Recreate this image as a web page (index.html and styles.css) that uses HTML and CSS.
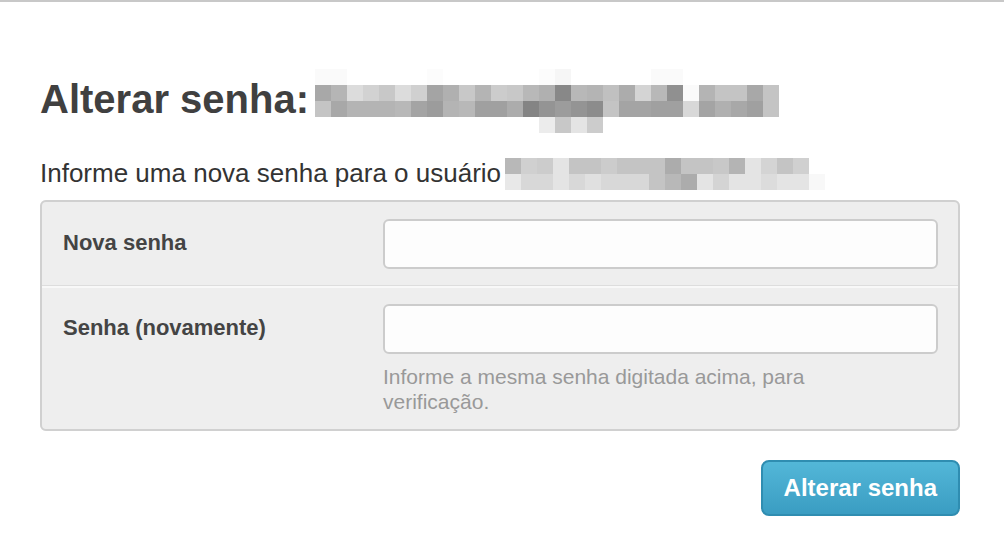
FILE: index.html
```html
<!DOCTYPE html>
<html lang="pt-BR">
<head>
<meta charset="utf-8">
<title>Alterar senha</title>
<link rel="stylesheet" href="styles.css">
</head>
<body>
<div class="topbar"></div>
<main class="page">
  <h1 class="title"><span>Alterar senha:</span>
    <svg class="blur blur-title" width="464" height="64" viewBox="0 0 464 64" shape-rendering="crispEdges" aria-hidden="true">
      <g>
        <rect x="0" y="0" width="32" height="16" fill="#fafafa"/>
        <rect x="112" y="0" width="16" height="16" fill="#fcfcfc"/>
        <rect x="224" y="0" width="16" height="16" fill="#fcfcfc"/>
        <rect x="240" y="0" width="16" height="16" fill="#f6f6f6"/>
        <rect x="336" y="0" width="32" height="16" fill="#fafafa"/>
      </g>
      <g>
        <rect x="0" y="16" width="16" height="16" fill="#a8a8a8"/>
        <rect x="16" y="16" width="16" height="16" fill="#b5b5b5"/>
        <rect x="32" y="16" width="16" height="16" fill="#dcdcdc"/>
        <rect x="48" y="16" width="16" height="16" fill="#d2d2d2"/>
        <rect x="64" y="16" width="16" height="16" fill="#c8c8c8"/>
        <rect x="80" y="16" width="16" height="16" fill="#dcdcdc"/>
        <rect x="96" y="16" width="16" height="16" fill="#d0d0d0"/>
        <rect x="112" y="16" width="16" height="16" fill="#a4a4a4"/>
        <rect x="128" y="16" width="16" height="16" fill="#b0b0b0"/>
        <rect x="144" y="16" width="16" height="16" fill="#c8c8c8"/>
        <rect x="160" y="16" width="16" height="16" fill="#b4b4b4"/>
        <rect x="176" y="16" width="16" height="16" fill="#cccccc"/>
        <rect x="192" y="16" width="16" height="16" fill="#c8c8c8"/>
        <rect x="208" y="16" width="16" height="16" fill="#b8b8b8"/>
        <rect x="224" y="16" width="16" height="16" fill="#b0b0b0"/>
        <rect x="240" y="16" width="16" height="16" fill="#888888"/>
        <rect x="256" y="16" width="16" height="16" fill="#b8b8b8"/>
        <rect x="272" y="16" width="16" height="16" fill="#b4b4b4"/>
        <rect x="288" y="16" width="16" height="16" fill="#c0c0c0"/>
        <rect x="304" y="16" width="16" height="16" fill="#acacac"/>
        <rect x="320" y="16" width="16" height="16" fill="#d4d4d4"/>
        <rect x="336" y="16" width="16" height="16" fill="#b8b8b8"/>
        <rect x="352" y="16" width="16" height="16" fill="#909090"/>
        <rect x="368" y="16" width="16" height="16" fill="#fafafa"/>
        <rect x="384" y="16" width="16" height="16" fill="#b4b4b4"/>
        <rect x="400" y="16" width="16" height="16" fill="#c4c4c4"/>
        <rect x="416" y="16" width="16" height="16" fill="#c4c4c4"/>
        <rect x="432" y="16" width="16" height="16" fill="#a8a8a8"/>
        <rect x="448" y="16" width="16" height="16" fill="#c4c4c4"/>
      </g>
      <g>
        <rect x="0" y="32" width="16" height="16" fill="#c4c4c4"/>
        <rect x="16" y="32" width="16" height="16" fill="#a8a8a8"/>
        <rect x="32" y="32" width="16" height="16" fill="#b4b4b4"/>
        <rect x="48" y="32" width="16" height="16" fill="#b4b4b4"/>
        <rect x="64" y="32" width="16" height="16" fill="#b4b4b4"/>
        <rect x="80" y="32" width="16" height="16" fill="#b8b8b8"/>
        <rect x="96" y="32" width="16" height="16" fill="#a4a4a4"/>
        <rect x="112" y="32" width="16" height="16" fill="#9c9c9c"/>
        <rect x="128" y="32" width="16" height="16" fill="#b4b4b4"/>
        <rect x="144" y="32" width="16" height="16" fill="#b8b8b8"/>
        <rect x="160" y="32" width="16" height="16" fill="#a0a0a0"/>
        <rect x="176" y="32" width="16" height="16" fill="#a0a0a0"/>
        <rect x="192" y="32" width="16" height="16" fill="#acacac"/>
        <rect x="208" y="32" width="16" height="16" fill="#848484"/>
        <rect x="224" y="32" width="16" height="16" fill="#949494"/>
        <rect x="240" y="32" width="16" height="16" fill="#9c9c9c"/>
        <rect x="256" y="32" width="16" height="16" fill="#949494"/>
        <rect x="272" y="32" width="16" height="16" fill="#8c8c8c"/>
        <rect x="288" y="32" width="16" height="16" fill="#c4c4c4"/>
        <rect x="304" y="32" width="16" height="16" fill="#a4a4a4"/>
        <rect x="320" y="32" width="16" height="16" fill="#a4a4a4"/>
        <rect x="336" y="32" width="16" height="16" fill="#a0a0a0"/>
        <rect x="352" y="32" width="16" height="16" fill="#a0a0a0"/>
        <rect x="368" y="32" width="16" height="16" fill="#d8d8d8"/>
        <rect x="384" y="32" width="16" height="16" fill="#a4a4a4"/>
        <rect x="400" y="32" width="16" height="16" fill="#b0b0b0"/>
        <rect x="416" y="32" width="16" height="16" fill="#a8a8a8"/>
        <rect x="432" y="32" width="16" height="16" fill="#a0a0a0"/>
        <rect x="448" y="32" width="16" height="16" fill="#c4c4c4"/>
      </g>
      <g>
        <rect x="224" y="48" width="16" height="16" fill="#ececec"/>
        <rect x="240" y="48" width="16" height="16" fill="#c8c8c8"/>
        <rect x="256" y="48" width="16" height="16" fill="#e4e4e4"/>
        <rect x="272" y="48" width="16" height="16" fill="#cccccc"/>
      </g>
    </svg>
  </h1>

  <p class="intro"><span>Informe uma nova senha para o usuário</span>
    <svg class="blur blur-user" width="320" height="32" viewBox="0 0 320 32" shape-rendering="crispEdges" aria-hidden="true">
      <g>
        <rect x="0" y="0" width="16" height="16" fill="#b8b8b8"/>
        <rect x="16" y="0" width="16" height="16" fill="#d0d0d0"/>
        <rect x="32" y="0" width="16" height="16" fill="#cccccc"/>
        <rect x="48" y="0" width="16" height="16" fill="#e4e4e4"/>
        <rect x="64" y="0" width="16" height="16" fill="#c4c4c4"/>
        <rect x="80" y="0" width="16" height="16" fill="#c4c4c4"/>
        <rect x="96" y="0" width="16" height="16" fill="#cccccc"/>
        <rect x="112" y="0" width="16" height="16" fill="#c4c4c4"/>
        <rect x="128" y="0" width="16" height="16" fill="#c4c4c4"/>
        <rect x="144" y="0" width="16" height="16" fill="#c4c4c4"/>
        <rect x="160" y="0" width="16" height="16" fill="#acacac"/>
        <rect x="176" y="0" width="16" height="16" fill="#c4c4c4"/>
        <rect x="192" y="0" width="16" height="16" fill="#c4c4c4"/>
        <rect x="208" y="0" width="16" height="16" fill="#c8c8c8"/>
        <rect x="224" y="0" width="16" height="16" fill="#b4b4b4"/>
        <rect x="240" y="0" width="16" height="16" fill="#e4e4e4"/>
        <rect x="256" y="0" width="16" height="16" fill="#d4d4d4"/>
        <rect x="272" y="0" width="16" height="16" fill="#c4c4c4"/>
        <rect x="288" y="0" width="16" height="16" fill="#d0d0d0"/>
      </g>
      <g>
        <rect x="0" y="16" width="16" height="16" fill="#e8e8e8"/>
        <rect x="16" y="16" width="16" height="16" fill="#d8d8d8"/>
        <rect x="32" y="16" width="16" height="16" fill="#d8d8d8"/>
        <rect x="48" y="16" width="16" height="16" fill="#e4e4e4"/>
        <rect x="64" y="16" width="16" height="16" fill="#d8d8d8"/>
        <rect x="80" y="16" width="16" height="16" fill="#e0e0e0"/>
        <rect x="96" y="16" width="16" height="16" fill="#d8d8d8"/>
        <rect x="112" y="16" width="16" height="16" fill="#d8d8d8"/>
        <rect x="128" y="16" width="16" height="16" fill="#d8d8d8"/>
        <rect x="144" y="16" width="16" height="16" fill="#c4c4c4"/>
        <rect x="160" y="16" width="16" height="16" fill="#b8b8b8"/>
        <rect x="176" y="16" width="16" height="16" fill="#acacac"/>
        <rect x="192" y="16" width="16" height="16" fill="#e4e4e4"/>
        <rect x="208" y="16" width="16" height="16" fill="#d4d4d4"/>
        <rect x="224" y="16" width="16" height="16" fill="#e4e4e4"/>
        <rect x="240" y="16" width="16" height="16" fill="#e4e4e4"/>
        <rect x="256" y="16" width="16" height="16" fill="#dcdcdc"/>
        <rect x="272" y="16" width="16" height="16" fill="#e4e4e4"/>
        <rect x="288" y="16" width="16" height="16" fill="#e4e4e4"/>
        <rect x="304" y="16" width="16" height="16" fill="#f8f8f8"/>
      </g>
    </svg>
  </p>

  <form class="form" action="#" onsubmit="return false;">
    <fieldset class="module">
      <div class="row">
        <label class="label" for="id_password1">Nova senha</label>
        <div class="field">
          <input class="input" type="password" id="id_password1" name="password1">
        </div>
      </div>
      <div class="row row-sep">
        <label class="label" for="id_password2">Senha (novamente)</label>
        <div class="field">
          <input class="input" type="password" id="id_password2" name="password2">
          <p class="help">Informe a mesma senha digitada acima, para verificação.</p>
        </div>
      </div>
    </fieldset>
    <div class="actions">
      <button class="btn" type="submit">Alterar senha</button>
    </div>
  </form>
</main>
</body>
</html>
```

FILE: styles.css
```css
* {
  box-sizing: border-box;
}

html, body {
  margin: 0;
  padding: 0;
  background: #ffffff;
}

body {
  font-family: "Liberation Sans", Arial, Helvetica, sans-serif;
  color: #333333;
}

.topbar {
  height: 2px;
  background: #c8c8c8;
}

.page {
  padding: 0 44px 0 40px;
}

.title {
  display: flex;
  align-items: flex-start;
  gap: 6px;
  height: 46px;
  margin: 74px 0 0;
  font-size: 40px;
  line-height: 46px;
  font-weight: bold;
  color: #404040;
}

.blur {
  flex: none;
  display: block;
}

.blur-title {
  margin-top: -7px;
}

.intro {
  display: flex;
  align-items: flex-start;
  gap: 4px;
  height: 30px;
  margin: 36px 0 0;
  font-size: 26px;
  line-height: 30px;
  color: #333333;
}

.blur-user {
  margin-top: 0;
}

.form {
  margin: 12px 0 0;
}

.module {
  margin: 0;
  padding: 0;
  border: 2px solid #d0d0d0;
  border-radius: 6px;
  background: #eeeeee;
  min-width: 0;
}

.row {
  display: grid;
  grid-template-columns: 320px 1fr;
  padding: 17px 20px 16px 21px;
  align-items: start;
}

.row-sep {
  border-top: 1px solid #dddddd;
  box-shadow: inset 0 2px 0 #f8f8f8;
  padding-top: 18px;
  padding-bottom: 15px;
}

.label {
  font-size: 22px;
  line-height: 48px;
  font-weight: bold;
  color: #444444;
}

.field {
  min-width: 0;
}

.input {
  display: block;
  width: 100%;
  height: 50px;
  margin: 0;
  padding: 0 12px;
  border: 2px solid #cccccc;
  border-radius: 6px;
  background: #fdfdfd;
  font-family: inherit;
  font-size: 22px;
  color: #444444;
  outline: none;
}

.help {
  max-width: 470px;
  margin: 10px 0 0;
  font-size: 21px;
  line-height: 25px;
  color: #999999;
}

.actions {
  display: flex;
  justify-content: flex-end;
  margin-top: 29px;
}

.btn {
  height: 56px;
  padding: 0 21px;
  border: 2px solid #2f8db1;
  border-radius: 8px;
  background: linear-gradient(to bottom, #53b7d8 0%, #3a9dc2 100%);
  font-family: inherit;
  font-size: 24px;
  font-weight: bold;
  color: #ffffff;
  cursor: pointer;
}
```
